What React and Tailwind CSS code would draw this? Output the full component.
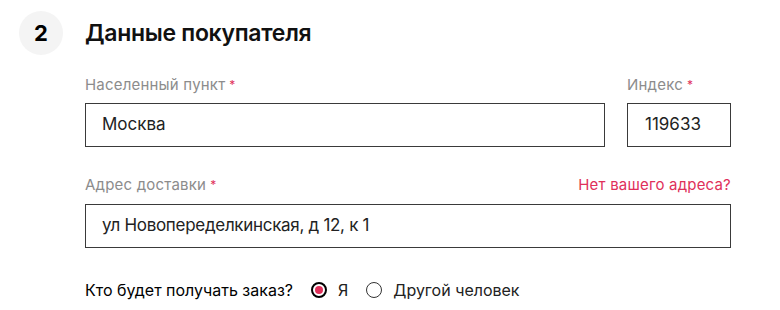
import React, { useState } from 'react';

const font = { fontFamily: 'Inter, "Noto Sans", sans-serif' };

const Label = ({ children, className = '' }) => (
    <div className={`text-[15px] leading-5 text-[#8c8c8c] tracking-[0.2px] ${className}`}>
        {children}
        <span className="text-[#e0305a] text-[12px] align-top ml-1">*</span>
    </div>
);

const Radio = ({ checked, label, onClick }) => (
    <button type="button" onClick={onClick} className="flex items-center gap-[11px]">
        <span
            className={`w-4 h-4 rounded-full flex items-center justify-center ${
                checked ? 'border-2 border-black' : 'border-[1.5px] border-[#333]'
            }`}
        >
            {checked && <span className="w-2 h-2 rounded-full bg-[#e0305a]" />}
        </span>
        <span className="text-[16px] leading-5 text-[#222]">{label}</span>
    </button>
);

const App = () => {
    const [who, setWho] = useState('me');

    return (
        <div className="w-[780px] h-[310px] bg-white flex gap-[22px] pl-[19px] pt-[11px]" style={font}>
            <div className="w-11 h-11 rounded-full bg-[#f4f4f4] flex items-center justify-center text-[22px] font-bold text-black shrink-0">
                2
            </div>
            <div className="w-[646px] flex flex-col">
                <h2 className="h-11 flex items-center text-[23px] font-semibold text-[#111] tracking-[-0.3px]">
                    Данные покупателя
                </h2>

                <div className="flex gap-[22px] mt-5">
                    <div className="flex-1 flex flex-col gap-2">
                        <Label>Населенный пункт</Label>
                        <div className="h-[44px] border border-[#3a3a3a] flex items-center px-4 text-[17px] text-[#222]">
                            Москва
                        </div>
                    </div>
                    <div className="w-[104px] flex flex-col gap-2">
                        <Label>Индекс</Label>
                        <div className="h-[44px] border border-[#3a3a3a] flex items-center px-[17px] text-[17px] text-[#222]">
                            119633
                        </div>
                    </div>
                </div>

                <div className="flex justify-between items-center mt-7">
                    <Label>Адрес доставки</Label>
                    <a href="#" className="text-[15px] leading-5 text-[#e0305a] tracking-[0.2px]">
                        Нет вашего адреса?
                    </a>
                </div>
                <div className="h-[44px] border border-[#3a3a3a] flex items-center px-4 text-[17px] text-[#222] mt-[9px] tracking-[-0.3px]">
                    ул Новопеределкинская, д 12, к 1
                </div>

                <div className="flex items-center mt-8 gap-[18px]">
                    <span className="text-[16px] leading-5 text-black">Кто будет получать заказ?</span>
                    <div className="flex items-center gap-[18px]">
                        <Radio checked={who === 'me'} label="Я" onClick={() => setWho('me')} />
                        <Radio checked={who === 'other'} label="Другой человек" onClick={() => setWho('other')} />
                    </div>
                </div>
            </div>
        </div>
    );
};

export default App;
